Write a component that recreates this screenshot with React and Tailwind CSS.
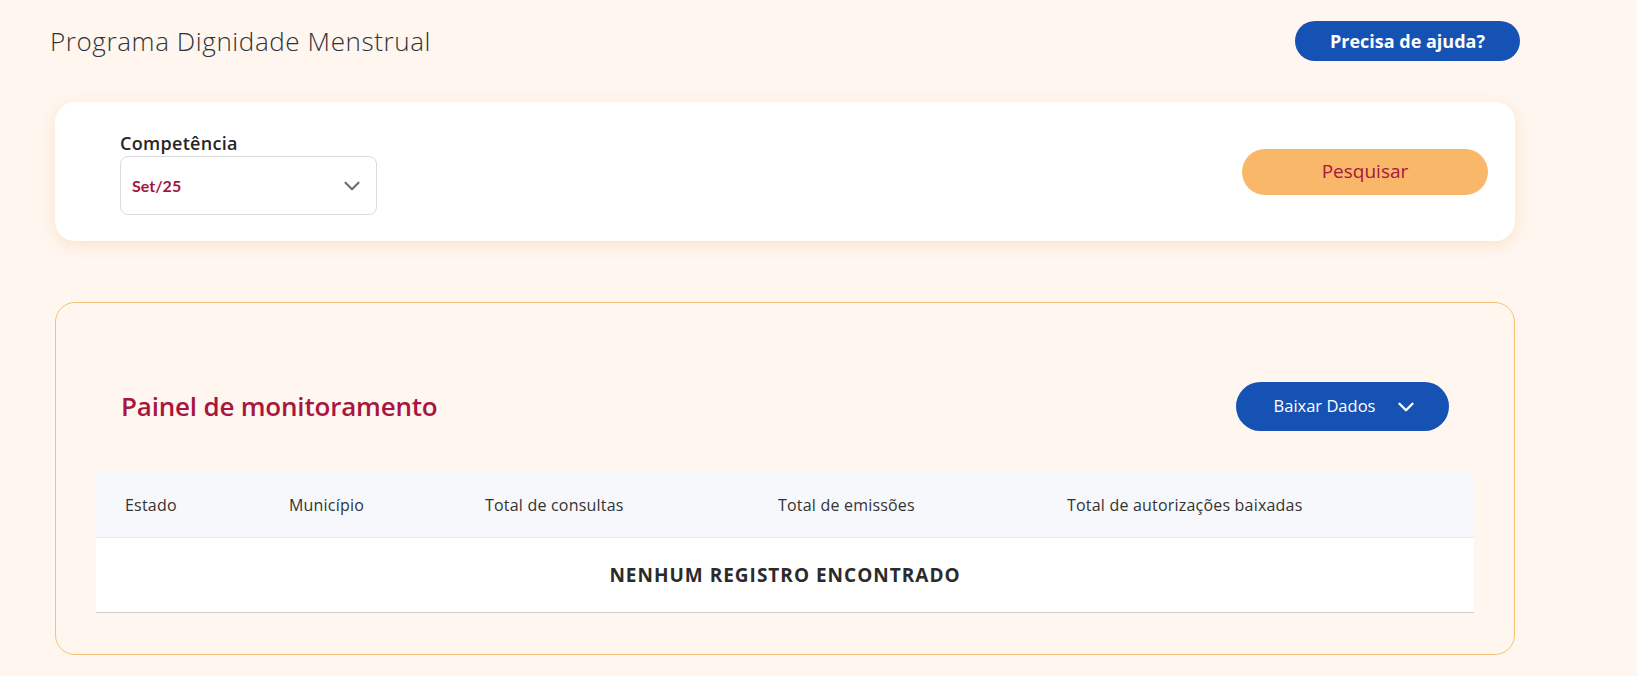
import { ChevronDown } from 'lucide-react';

const columns = [
  { key: 'estado', label: 'Estado', width: 'w-[164px]' },
  { key: 'municipio', label: 'Município', width: 'w-[196px]' },
  { key: 'consultas', label: 'Total de consultas', width: 'w-[293px]' },
  { key: 'emissoes', label: 'Total de emissões', width: 'w-[289px]' },
  { key: 'autorizacoes', label: 'Total de autorizações baixadas', width: 'flex-1' },
];

export default function App() {
  return (
    <div className="min-h-[676px] bg-[#fef6ef] pl-[50px] pt-[21px] pb-[21px] font-['Open_Sans',sans-serif] text-[#333]">
      <header className="flex w-[1470px] items-center justify-between">
        <h1 className="text-[26px] font-light tracking-[0.6px] text-[#2f3337]">Programa Dignidade Menstrual</h1>
        <button className="h-[40px] w-[225px] rounded-full bg-[#1552b4] text-[18px] font-bold text-white">
          Precisa de ajuda?
        </button>
      </header>

      <section className="ml-[5px] mt-[41px] flex h-[139px] w-[1460px] items-center justify-between rounded-[20px] bg-white pl-[65px] pr-[27px] pt-[4px] shadow-[0_4px_14px_rgba(249,183,105,0.28)]">
        <div className="flex flex-col">
          <label className="text-[18px] font-semibold leading-[22px] tracking-[0.3px] text-[#262626]">Competência</label>
          <div className="mt-[2px] flex h-[59px] w-[257px] items-center justify-between rounded-[8px] border border-[#dcdcdc] pl-[11px] pr-[11px]">
            <span className="font-['Lato',sans-serif] text-[16px] font-bold text-[#a31440]">Set/25</span>
            <ChevronDown size={26} strokeWidth={2} className="text-[#6b6f75]" />
          </div>
        </div>
        <button className="mb-[4px] h-[46px] w-[246px] rounded-full bg-[#f9b769] text-[19px] font-medium text-[#a8163f]">
          Pesquisar
        </button>
      </section>

      <section className="ml-[5px] mt-[61px] w-[1460px] rounded-[20px] border border-[#f6c276] px-[40px] pb-[41px] pt-[79px]">
        <div className="flex items-center justify-between px-[25px]">
          <h2 className="text-[26px] font-semibold tracking-[-0.2px] text-[#a8163f]">Painel de monitoramento</h2>
          <button className="flex h-[49px] w-[213px] items-center justify-center gap-[18px] rounded-full bg-[#1552b4] pl-[8px] text-[16.5px] font-medium text-white">
            Baixar Dados
            <ChevronDown size={26} strokeWidth={2.2} />
          </button>
        </div>

        <div className="mt-[41px] w-full">
          <div className="flex h-[66px] items-center border-b border-[#e6e9ee] bg-[#f7f8fb] pl-[29px] text-[16px] tracking-[0.2px] text-[#333]">
            {columns.map((col) => (
              <div key={col.key} className={col.width}>{col.label}</div>
            ))}
          </div>
          <div className="flex h-[75px] items-center justify-center border-b border-[#c9cdd2] bg-white">
            <span className="text-[19px] font-bold tracking-[1px] text-[#2b2b2b]">NENHUM REGISTRO ENCONTRADO</span>
          </div>
        </div>
      </section>
    </div>
  );
}
